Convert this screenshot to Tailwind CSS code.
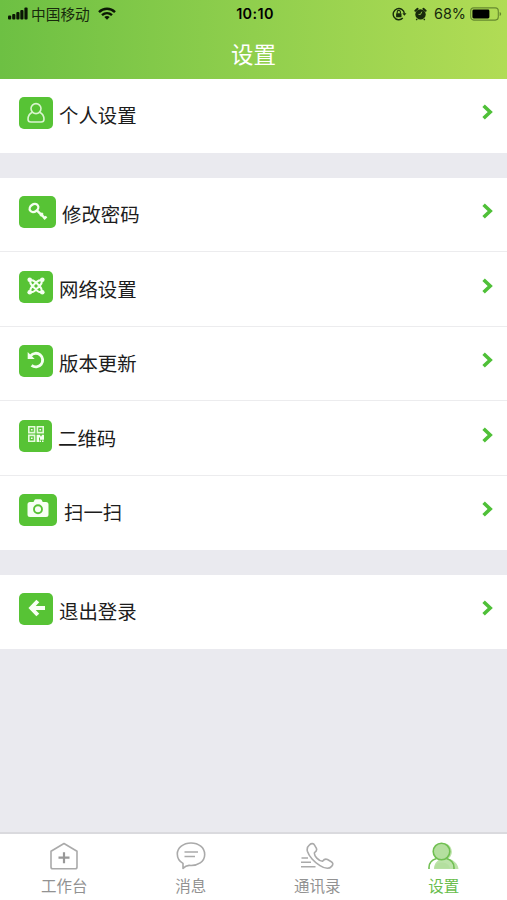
<!DOCTYPE html>
<html lang="zh-CN">
<head>
<meta charset="utf-8">
<title>设置</title>
<script src="https://cdn.jsdelivr.net/npm/@tailwindcss/browser@4"></script>
</head>
<body class="w-[507px] h-[900px] overflow-hidden bg-[#eaeaef] font-['Liberation_Sans','Noto_Sans_CJK_SC',sans-serif] text-[#1c1c1c]">
<div class="flex h-[900px] flex-col">
  <header class="flex h-[79px] flex-col bg-linear-to-r from-[#6dc043] via-[#90cf4d] to-[#b1dc55]">
    <div class="grid h-[27px] grid-cols-[1fr_auto_1fr] items-center text-black">
      <div class="flex items-center pl-2">
        <svg class="h-[13px] w-5" viewBox="0 0 20 13"><g fill="#0b1705"><rect x="0" y="8.5" width="3.2" height="4" rx="1"/><rect x="4.2" y="7" width="3.2" height="5.5" rx="1"/><rect x="8.3" y="5" width="3.2" height="7.5" rx="1"/><rect x="12.3" y="3" width="3.2" height="9.5" rx="1"/><rect x="16.4" y="0.5" width="3.2" height="12" rx="1"/></g></svg>
        <span class="ml-[3px] pt-[3px] text-[14.7px] leading-none text-[#172a0c]">中国移动</span>
        <svg class="ml-2 h-[13px] w-[18px]" viewBox="0 0 18 13" fill="none" stroke="#0b1705" stroke-width="2.4"><path d="M1 5.1C5.5.7 12.5.7 17 5.1"/><path d="M4 8.2c3-2.8 7-2.8 10 0"/><path d="M6.3 10 9 12.8 11.7 10C10.2 8.6 7.8 8.6 6.3 10Z" fill="#0b1705" stroke="none"/></svg>
      </div>
      <div class="pl-[3px] pt-px font-['Inter','Liberation_Sans',sans-serif] text-[14.4px] font-semibold tracking-[.4px]">10:10</div>
      <div class="flex items-center justify-end pr-[5px]">
        <svg class="h-[14px] w-[15px]" viewBox="0 0 15 14" fill="none" stroke="#172a0c" stroke-width="1.4"><path d="M10.8 11.1A5.6 5.6 0 1 1 12.4 6.5"/><path d="m10.3 6.3 2.1 2.4 2.1-2.4Z" fill="#172a0c" stroke="none"/><rect x="4.1" y="6.2" width="5.4" height="4" rx=".5" fill="#172a0c" stroke="none"/><path d="M5.2 6.5V5a1.6 1.6 0 0 1 3.2 0v1.5" stroke-width="1.1"/></svg>
        <svg class="ml-[7px] h-[14px] w-[13px]" viewBox="0 0 13 14"><circle cx="6.5" cy="7.4" r="5.2" fill="#172a0c"/><path d="M1.4 3.8 3.6 1.8M11.6 3.8 9.4 1.8" stroke="#172a0c" stroke-width="2" stroke-linecap="round"/><path d="M3.1 12 2.300 13M9.900 12l.8 1" stroke="#172a0c" stroke-width="1.400"/><path d="M7.800 4.700 6.500 7.400H4.500" fill="none" stroke="#9dd34f" stroke-width=".9"/></svg>
        <span class="ml-[7px] pt-px font-['Inter','Liberation_Sans',sans-serif] text-[14.4px] leading-none text-[#172a0c]">68%</span>
        <svg class="ml-1 h-[14px] w-8" viewBox="0 0 32 14"><rect x=".7" y=".9" width="27.6" height="12.2" rx="3" fill="none" stroke="#66892f" stroke-width="1.1"/><rect x="2.4" y="2.6" width="17" height="8.8" rx="1.4" fill="#000"/><path d="M29.6 5v4q1.6-.6 1.6-2t-1.6-2Z" fill="#66892f"/></svg>
      </div>
    </div>
    <h1 class="flex h-[52px] items-center justify-center pt-[7px] text-[22.5px] leading-none text-white">设置</h1>
  </header>

  <main class="flex-1">
    <section class="bg-white">
      <div class="flex h-[74px] items-start pt-[18px] pr-[14px] pl-[19px]">
        <span class="flex h-8 w-[34px] items-center justify-center rounded-[5px] bg-[#57c335]"><svg class="mb-px h-[22px] w-5" viewBox="0 0 20 22" fill="none" stroke="#d9f5cf" stroke-width="1.6"><circle cx="10" cy="6.6" r="5"/><path d="M6.5 10.2C3.7 11.5 2 14.3 2 17.3 2 19.3 3 20 4.8 20h10.4c1.8 0 2.8-.7 2.8-2.7 0-3-1.7-5.8-4.5-7.1"/></svg></span>
        <span class="mt-[3px] ml-[6px] text-[19.4px] leading-8">个人设置</span>
        <svg class="mt-[7px] ml-auto h-4 w-[11px]" viewBox="0 0 11 16" fill="none" stroke="#4fc038" stroke-width="3.6"><path d="m1.6 1.7 6.6 6.3-6.6 6.3"/></svg>
      </div>
    </section>

    <section class="mt-[25px] bg-white">
      <div class="flex h-[74.4px] items-start border-b border-[#ececee] pt-[18px] pr-[14px] pl-[19px]">
        <span class="flex h-8 w-[37px] items-center justify-center rounded-[5px] bg-[#57c335]"><svg class="mb-0.5 h-[19px] w-5" viewBox="0 0 20 19" fill="none" stroke="#f4fff0" stroke-width="2.4"><ellipse cx="6" cy="6" rx="4.600" ry="3.700" transform="rotate(-35 6 6)" stroke-width="2.300"/><path d="m8.800 8.300 8.600 8.400M14.800 11.200l-2.600 2.600M18.500 14.500l-2.700 2.700"/></svg></span>
        <span class="mt-[3px] ml-[6px] text-[19.4px] leading-8">修改密码</span>
        <svg class="mt-[7px] ml-auto h-4 w-[11px]" viewBox="0 0 11 16" fill="none" stroke="#4fc038" stroke-width="3.6"><path d="m1.6 1.7 6.6 6.3-6.6 6.3"/></svg>
      </div>
      <div class="flex h-[74.4px] items-start border-b border-[#ececee] pt-[18.6px] pr-[14px] pl-[19px]">
        <span class="flex h-8 w-[34px] items-center justify-center rounded-[5px] bg-[#57c335]"><svg class="mb-0.5 h-[18px] w-[18px]" viewBox="0 0 18 18" fill="none" stroke="#f4fff0" stroke-width="2.1"><g fill="#f4fff0" stroke="none"><circle cx="2.7" cy="2.7" r="2.3"/><circle cx="15.3" cy="2.7" r="2.3"/><circle cx="2.7" cy="15.3" r="2.3"/><circle cx="15.3" cy="15.3" r="2.3"/></g><path d="M3 3C3 6 3 6.500 5 8.500L10.500 14C12 15.300 13.500 15.300 15 15M15 3C15 6 15 6.500 13 8.500L7.500 14C6 15.300 4.500 15.300 3 15M3 3C6 3 6.500 3 8.500 5L13 9.500C15 11.500 15 12 15 15M15 3C12 3 11.500 3 9.500 5L5 9.500C3 11.500 3 12 3 15"/></svg></span>
        <span class="mt-[3px] ml-[6px] text-[19.4px] leading-8">网络设置</span>
        <svg class="mt-[7px] ml-auto h-4 w-[11px]" viewBox="0 0 11 16" fill="none" stroke="#4fc038" stroke-width="3.6"><path d="m1.6 1.7 6.6 6.3-6.6 6.3"/></svg>
      </div>
      <div class="flex h-[74.4px] items-start border-b border-[#ececee] pt-[18.3px] pr-[14px] pl-[19px]">
        <span class="flex h-8 w-[34px] items-center justify-center rounded-[5px] bg-[#57c335]"><svg class="mb-0.5 h-[18px] w-[18px]" viewBox="0 0 18 18" fill="none" stroke="#f4fff0" stroke-width="2.9"><path d="M3.600 4.800A6.800 6.800 0 1 1 4.600 14.400"/><path d="M.7 1v7h7Z" fill="#f4fff0" stroke="none"/></svg></span>
        <span class="mt-[3px] ml-[6px] text-[19.4px] leading-8">版本更新</span>
        <svg class="mt-[7px] ml-auto h-4 w-[11px]" viewBox="0 0 11 16" fill="none" stroke="#4fc038" stroke-width="3.6"><path d="m1.6 1.7 6.6 6.3-6.6 6.3"/></svg>
      </div>
      <div class="flex h-[74.4px] items-start border-b border-[#ececee] pt-[18.6px] pr-[14px] pl-[19px]">
        <span class="flex h-8 w-[33px] items-center justify-center rounded-[5px] bg-[#57c335]"><svg class="mb-[3px] h-4 w-4" viewBox="0 0 16 16" fill="none" stroke="#e4fadb" stroke-width="1.6"><path d="M.8.8h5.8v5.8H.8ZM9.4.8h5.8v5.8H9.4ZM.8 9.4h5.8v5.8H.8Z"/><path d="M2.9 2.9h1.7v1.7H2.9ZM11.4 2.9h1.7v1.7h-1.7ZM2.9 11.4h1.7v1.7H2.9ZM8.600 8.700h3.700v1.500h1.400V8.700H16v5h-4V11.500h-1V16H8.600ZM11.500 14.500H13V16h-1.500ZM14 14.500h1.500V16H14Z" fill="#f4fff0" stroke="none"/></svg></span>
        <span class="mt-[3px] ml-[6px] text-[19.4px] leading-8">二维码</span>
        <svg class="mt-[7px] ml-auto h-4 w-[11px]" viewBox="0 0 11 16" fill="none" stroke="#4fc038" stroke-width="3.6"><path d="m1.6 1.7 6.6 6.3-6.6 6.3"/></svg>
      </div>
      <div class="flex h-[74.4px] items-start pt-[18.4px] pr-[14px] pl-[19px]">
        <span class="flex h-8 w-[38px] items-center justify-center rounded-[5px] bg-[#57c335]"><svg class="mb-[3px] h-[19px] w-[22px]" viewBox="0 0 22 19"><path d="M3 3h3.5l1-2.1Q7.8.3 8.8.3h4.6q1 0 1.3.6l1 2.1H19q2.5 0 2.5 2.5v10Q21.500 18 19 18H3Q.5 18 .5 15.500v-10Q.5 3 3 3Z" fill="#f7fff4"/><circle cx="11" cy="10.300" r="4" fill="none" stroke="#57c335" stroke-width="1.900"/></svg></span>
        <span class="mt-[3px] ml-[7px] text-[19.4px] leading-8">扫一扫</span>
        <svg class="mt-[7px] ml-auto h-4 w-[11px]" viewBox="0 0 11 16" fill="none" stroke="#4fc038" stroke-width="3.6"><path d="m1.6 1.7 6.6 6.3-6.6 6.3"/></svg>
      </div>
    </section>

    <section class="mt-[25px] bg-white">
      <div class="flex h-[74px] items-start pt-[18px] pr-[14px] pl-[19px]">
        <span class="flex h-8 w-[34px] items-center justify-center rounded-[5px] bg-[#57c335]"><svg class="mb-px ml-px h-[18px] w-[18px]" viewBox="0 0 18 18" fill="none" stroke="#f7fff4" stroke-width="4"><path d="M9.800 2 3.200 9l6.600 7M4 9H17"/></svg></span>
        <span class="mt-[3px] ml-[6px] text-[19.4px] leading-8">退出登录</span>
        <svg class="mt-[7px] ml-auto h-4 w-[11px]" viewBox="0 0 11 16" fill="none" stroke="#4fc038" stroke-width="3.6"><path d="m1.6 1.7 6.6 6.3-6.6 6.3"/></svg>
      </div>
    </section>
  </main>

  <nav class="grid h-[68px] grid-cols-4 border-t-2 border-[#dadade] bg-white pt-2 pl-px text-[15.5px] leading-none text-[#929292]">
    <div class="flex flex-col items-center gap-2">
      <svg class="h-[29px] w-[30px]" viewBox="0 0 30 29" fill="none" stroke="#aaa" stroke-width="1.600"><path d="M15 1.500 28 9.300V25q0 1.800-1.800 1.800H3.800Q2 26.800 2 25V9.300Z" stroke-linejoin="round"/><path d="M15 10.200v11M9.500 15.700h11" stroke="#989898" stroke-width="2.200"/></svg>
      <span>工作台</span>
    </div>
    <div class="flex flex-col items-center gap-2">
      <svg class="h-[29px] w-[30px]" viewBox="0 0 30 29" fill="none" stroke="#aaa" stroke-width="1.600"><path d="M15 1C7.300 1 1.300 5.800 1.300 12c0 4.500 2.200 7.500 5.700 9.400v5c2-2 3.500-2.800 6-3C22 24.200 28.700 19.500 28.700 12.500 28.700 5.800 22.700 1 15 1Z" stroke-linejoin="round"/><path d="M8.500 10h13.500M8.500 14.500h10.500"/></svg>
      <span>消息</span>
    </div>
    <div class="flex flex-col items-center gap-2">
      <svg class="h-[29px] w-[34px]" viewBox="0 0 34 29" fill="none" stroke="#aaa" stroke-width="1.600"><path d="M9.500 2.800c2-1.700 4-1.500 5.200.5l1.600 2.800c1 1.900.4 3-1.800 4.600-.7 3.200 4.200 8.300 8 8.500 1.800-2.300 3.200-2.700 5-1.700l3.400 2c2.300 1.400 2.500 2.900.7 4.900-2.300 2.600-6.500 2.400-11.600-.8C14.300 20.200 8.800 14.100 7.400 9.300 6.700 6.400 7.400 4.500 9.500 2.800Z"/><path d="M1.500 16H8M1 20.300h10M1 24.700h14.500"/></svg>
      <span>通讯录</span>
    </div>
    <div class="flex flex-col items-center gap-2 text-[#68bd4b]">
      <svg class="h-[29px] w-[31px]" viewBox="0 0 31 29" fill="none"><path d="M16 1a8.800 8.800 0 0 1 4.500 15.600C26 18.200 30 22 30.500 27H6C6 21 10 17.500 14 16.500Z" fill="#bce3a9"/><g stroke="#70bf52" stroke-width="1.600"><circle cx="13.500" cy="9.500" r="8.300" fill="#b4df9f"/><path d="M1 27v-1.500C1 21 4 17.800 8.600 16.500" /><path d="M18.400 16.500C23 17.800 26 21 26 25.500V27"/></g><path d="M6.500 26.500c.5-4 3-6 7-6s8 2 8.500 6Z" fill="#b4df9f"/></svg>
      <span>设置</span>
    </div>
  </nav>
</div>
</body>
</html>
